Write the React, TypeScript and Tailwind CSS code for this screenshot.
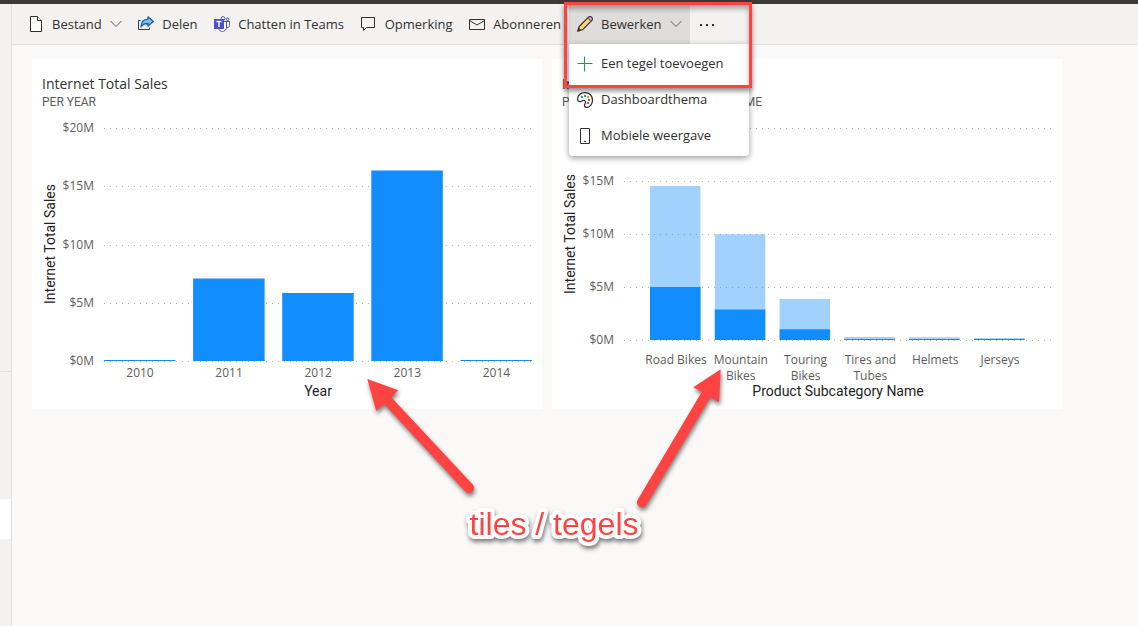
import type { ReactNode } from 'react';

const ui = "font-['Open_Sans','Noto_Sans',sans-serif]";

function FileIcon() {
  return (
    <svg width="16" height="16" viewBox="0 0 16 16" fill="#fff" stroke="#323130" aria-hidden="true">
      <path d="M2.5 .5H9.5L13.5 4.5V15.5H2.5Z" />
      <path d="M9.5 .5V4.5H13.5" />
    </svg>
  );
}

function ShareIcon() {
  return (
    <svg width="16" height="16" viewBox="0 0 16 16" fill="none" aria-hidden="true">
      <path d="M2.5 4.5H.5V13.5H11.5V11.5" stroke="#3b3a39" />
      <path d="M10 .8L15.4 5.4L10 10V7.5C6.500 7.300 4.500 8.500 3 11C3 6.500 5.500 3.500 10 3.200Z" fill="#83beec" stroke="#1066ab" strokeWidth="1.300" strokeLinejoin="round" />
    </svg>
  );
}

function TeamsIcon() {
  return (
    <svg width="16" height="16" viewBox="0 0 16 16" fill="none" aria-hidden="true">
      <circle cx="9" cy="2.500" r="1.900" fill="#fff" stroke="#4b53bc" />
      <circle cx="13.700" cy="3.200" r="1.300" fill="#fff" stroke="#4b53bc" />
      <path d="M12 5.500H15.500V9.500C15.500 11.200 14 12 12.500 11.500" fill="#fff" stroke="#4b53bc" />
      <path d="M5 5.500H12.500V11C12.500 17 4.500 16.500 4.500 12Z" fill="#fff" stroke="#4b53bc" />
      <rect y="3" width="10" height="10" fill="#4b53bc" />
      <path d="M2.500 5.500H7.500M5 5.500V11" stroke="#fff" strokeWidth="1.300" />
    </svg>
  );
}

function CommentIcon() {
  return (
    <svg width="16" height="16" viewBox="0 0 16 16" fill="none" stroke="#323130" aria-hidden="true">
      <path d="M.5 1.500H13.500V11.500H5.500L2.500 14.500V11.500H.5Z" />
    </svg>
  );
}

function MailIcon() {
  return (
    <svg width="16" height="16" viewBox="0 0 16 16" fill="none" stroke="#323130" aria-hidden="true">
      <path d="M.5 3.500H15.500V13.500H.5Z M.5 4.500L8 9L15.500 4.500" />
    </svg>
  );
}

function PencilIcon() {
  return (
    <svg width="16" height="16" viewBox="0 0 16 16" strokeLinejoin="round" aria-hidden="true">
      <path d="M.7 15.300L2.200 10.500L11.800 .9C12.500 .3 13.500 .3 14.200 .9L15.100 1.800C15.700 2.500 15.700 3.500 15.100 4.200L5.500 13.800Z" fill="#ffd679" stroke="#323130" strokeWidth="1.200" />
      <path d="M11.800 1.200C12.600 .5 13.500 .5 14.200 1.200L14.900 1.900C15.500 2.600 15.500 3.400 14.900 4.100L13.800 5.200L10.800 2.200Z" fill="#c8a2d8" stroke="#4f3560" />
      <path d="M.7 15.300L1.800 11.800L4.300 14.200Z" fill="#323130" />
    </svg>
  );
}

function PlusIcon() {
  return (
    <svg width="16" height="16" viewBox="0 0 16 16" stroke="#1e9b4e" aria-hidden="true">
      <path d="M7.500 .5V15.500M.5 7.500H15.500" />
    </svg>
  );
}

function PaletteIcon() {
  return (
    <svg width="16" height="16" viewBox="0 0 16 16" aria-hidden="true">
      <path d="M.6 7C1 3 4 .6 8 .6C12.500 .6 15.500 3.800 15.500 8C15.500 12.300 12.400 15.300 9.600 15.400C7.400 15.400 7 13.400 8 11.900C9 10.300 8.500 8.600 6.700 8.400C5 8.300 4.300 10 2.600 9.600C1.200 9.300 .5 8.300 .6 7Z" fill="#fff" stroke="#323130" strokeWidth="1.200" />
      <rect x="4" y="4" width="2" height="2" fill="#1e9be0" />
      <rect x="7" y="3" width="2" height="2" fill="#2ba14b" />
      <rect x="10" y="4" width="2" height="2" fill="#e8912d" />
      <rect x="11" y="7" width="2" height="2" fill="#d83b30" />
      <rect x="10" y="10" width="2" height="2" fill="#a346b5" />
    </svg>
  );
}

function PhoneIcon() {
  return (
    <svg width="16" height="16" viewBox="0 0 16 16" fill="none" stroke="#323130" aria-hidden="true">
      <path d="M3.500 .5H12.500V15.500H3.500Z M7 13.500H9" />
    </svg>
  );
}

function Chevron() {
  return (
    <svg width="12" height="16" viewBox="0 0 12 16" fill="none" stroke="#605e5c" aria-hidden="true">
      <path d="M.5 5L6 10.500L11.500 5" />
    </svg>
  );
}

function ToolButton({ icon, label, menu, active }: { icon: ReactNode; label: string; menu?: boolean; active?: boolean }) {
  return (
    <button
      type="button"
      aria-haspopup={menu ? 'menu' : undefined}
      aria-expanded={active}
      className={`flex h-10 items-center gap-2 px-2 whitespace-nowrap ${active ? 'bg-[#dfdddb]' : ''}`}
    >
      {icon}
      <span className="pt-0.5">{label}</span>
      {menu && <Chevron />}
    </button>
  );
}

const menuItems = [
  { label: 'Een tegel toevoegen', icon: <PlusIcon /> },
  { label: 'Dashboardthema', icon: <PaletteIcon /> },
  { label: 'Mobiele weergave', icon: <PhoneIcon /> },
];

function EditMenu() {
  return (
    <div className="relative">
      <ToolButton icon={<PencilIcon />} label="Bewerken" menu active />
      <div
        role="menu"
        className="absolute top-10 left-0 z-10 flex w-[180px] flex-col rounded-b-sm bg-white pt-0.5 pb-0.5 shadow-[0_2px_6px_rgba(0,0,0,0.4)]"
      >
        {menuItems.map((item) => (
          <button key={item.label} type="button" role="menuitem" className="flex h-9 items-center gap-2 px-2 whitespace-nowrap">
            {item.icon}
            <span>{item.label}</span>
          </button>
        ))}
      </div>
      <div className="pointer-events-none absolute -top-0.5 -left-[5px] z-20 h-[86px] w-[188px] border-3 border-[#ff4343] shadow-[0_3px_5px_rgba(0,0,0,0.45),inset_0_4px_5px_rgba(0,0,0,0.3)]" />
    </div>
  );
}

function Tile({ title, subtitle, children }: { title: string; subtitle: string; children: ReactNode }) {
  return (
    <article className="bg-white pt-4">
      <header className="px-[10px] leading-[18px]">
        <h2 className="text-[14px] text-[#323130]">{title}</h2>
        <p className="font-[Roboto,sans-serif] text-[12px] whitespace-nowrap text-[#605e5c]">{subtitle}</p>
      </header>
      {children}
    </article>
  );
}

function GridLine({ y, from, to, label }: { y: number; from: number; to: number; label: string }) {
  return (
    <g>
      <line x1={from} x2={to} y1={y + 0.5} y2={y + 0.5} stroke="#b8b6b4" strokeDasharray="1 5" />
      <text x={62} y={y + 4} textAnchor="end" className="fill-[#605e5c] text-[12px]">
        {label}
      </text>
    </g>
  );
}

function AxisTitle({ x, y, vertical, children }: { x: number; y: number; vertical?: boolean; children: string }) {
  return (
    <text
      x={x}
      y={y}
      textAnchor="middle"
      transform={vertical ? `rotate(-90 ${x} ${y})` : undefined}
      className="fill-[#252423] font-[Roboto,sans-serif] text-[14px]"
    >
      {children}
    </text>
  );
}

const yearly = [
  { year: '2010', height: 1 },
  { year: '2011', height: 82.5 },
  { year: '2012', height: 68 },
  { year: '2013', height: 190.5 },
  { year: '2014', height: 1 },
];

function YearChart() {
  return (
    <svg viewBox="0 2 510 298" className="block w-full" role="img" aria-label="Internet Total Sales per year">
      {['$20M', '$15M', '$10M', '$5M', '$0M'].map((label, i) => (
        <GridLine key={label} y={Math.round(19 + i * 58.25)} from={72} to={501} label={label} />
      ))}
      {yearly.map((d, i) => (
        <g key={d.year}>
          <rect x={72 + i * 89.1} y={252 - d.height} width="71.500" height={d.height} fill="#118dff" />
          <text x={108 + i * 89.1} y={268} textAnchor="middle" className="fill-[#605e5c] text-[12px]">
            {d.year}
          </text>
        </g>
      ))}
      <AxisTitle x={23} y={135} vertical>Internet Total Sales</AxisTitle>
      <AxisTitle x={286} y={287}>Year</AxisTitle>
    </svg>
  );
}

const categories = [
  { lines: ['Road Bikes'], total: 154, part: 53 },
  { lines: ['Mountain', 'Bikes'], total: 105.7, part: 30.5 },
  { lines: ['Touring', 'Bikes'], total: 41, part: 10.7 },
  { lines: ['Tires and', 'Tubes'], total: 3, part: 1 },
  { lines: ['Helmets'], total: 2.7, part: 1 },
  { lines: ['Jerseys'], total: 2, part: 1 },
];

function CategoryChart() {
  return (
    <svg viewBox="0 2 510 298" className="block w-full" role="img" aria-label="Internet Total Sales per product subcategory">
      {['$20M', '$15M', '$10M', '$5M', '$0M'].map((label, i) => (
        <GridLine key={label} y={19 + i * 53} from={72} to={500} label={label} />
      ))}
      {categories.map((d, i) => (
        <g key={d.lines[0]}>
          <rect x={98 + i * 64.8} y={231 - d.total} width="50.500" height={d.total} fill="#118dff" fillOpacity="0.4" />
          <rect x={98 + i * 64.8} y={231 - d.part} width="50.500" height={d.part} fill="#118dff" />
          {d.lines.map((line, n) => (
            <text key={line} x={124 + i * 64.8} y={255 + n * 16} textAnchor="middle" className="fill-[#605e5c] text-[12px]">
              {line}
            </text>
          ))}
        </g>
      ))}
      <AxisTitle x={23} y={125} vertical>Internet Total Sales</AxisTitle>
      <AxisTitle x={286} y={287}>Product Subcategory Name</AxisTitle>
    </svg>
  );
}

function Annotations() {
  return (
    <svg
      width="400"
      height="200"
      viewBox="350 360 400 200"
      className="pointer-events-none absolute top-[360px] left-[350px] z-20"
    >
      <g fill="#ff4343" className="drop-shadow-[1px_3px_2px_rgba(0,0,0,0.5)]">
        <path d="M367.300 379L398.300 390.300L391.300 397.300L472.700 484.600A5 5 0 0 1 465.300 491.400L384.300 404.300L376.300 411Z" />
        <path d="M720.700 369.300L719 402.300L710.300 397.300L646.300 505A5 5 0 0 1 637.700 499.700L701.700 392L693.300 387.300Z" />
      </g>
      <text
        x="554"
        y="535"
        textAnchor="middle"
        fill="#ff4343"
        stroke="#fff"
        strokeWidth="8"
        strokeLinejoin="round"
        paintOrder="stroke"
        className="font-['Liberation_Sans',Arial,sans-serif] text-[32px] drop-shadow-[1px_3px_2px_rgba(0,0,0,0.5)]"
      >
        tiles / tegels
      </text>
    </svg>
  );
}

export default function App() {
  return (
    <div className={`relative flex min-h-screen flex-col bg-[#faf9f8] text-[13px] text-[#323130] ${ui}`}>
      <div className="h-1 bg-[#3b3a39]" />
      <div className="flex flex-1">
        <nav className="flex w-3 shrink-0 flex-col border-r border-[#e1dfdd] bg-[#f3f2f1]" aria-label="Navigatie">
          <div className="h-[368px] border-b border-[#e1dfdd]" />
          <div className="mt-[127px] h-10 bg-white" />
        </nav>
        <div className="flex min-w-0 flex-1 flex-col">
          <div role="toolbar" className="flex h-[41px] border-b border-[#e1dfdd] bg-[#f3f2f1] pl-2">
            <div className="flex w-[549px] shrink-0 justify-between">
              <ToolButton icon={<FileIcon />} label="Bestand" menu />
              <ToolButton icon={<ShareIcon />} label="Delen" />
              <ToolButton icon={<TeamsIcon />} label="Chatten in Teams" />
              <ToolButton icon={<CommentIcon />} label="Opmerking" />
              <ToolButton icon={<MailIcon />} label="Abonneren" />
            </div>
            <EditMenu />
            <button type="button" aria-label="Meer opties" className="flex h-10 items-center px-[10px]">
              <svg width="16" height="16" viewBox="0 0 16 16" fill="#323130" aria-hidden="true">
                <path d="M0 8h2v2h-2zM6 8h2v2h-2zM12 8h2v2h-2z" />
              </svg>
            </button>
          </div>
          <main className="grid max-w-[1070px] grid-cols-2 gap-[10px] px-5 pt-[14px]">
            <Tile title="Internet Total Sales" subtitle="PER YEAR">
              <YearChart />
            </Tile>
            <Tile title="Internet Total Sales" subtitle="PER PRODUCT SUBCATEGORY NAME">
              <CategoryChart />
            </Tile>
          </main>
        </div>
      </div>
      <Annotations />
    </div>
  );
}
